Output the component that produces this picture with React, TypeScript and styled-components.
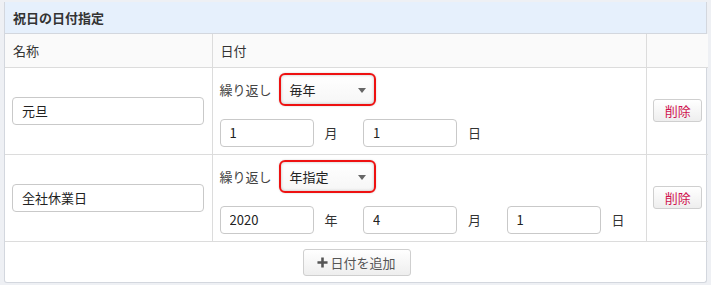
import styled, { createGlobalStyle } from "styled-components";

const GlobalStyle = createGlobalStyle`
  html, body {
    margin: 0;
    padding: 0;
    background: #eef0f4;
    font-family: "Noto Sans CJK JP", "Noto Sans", sans-serif;
    font-size: 13px;
    color: #333;
  }
`;

interface Holiday {
  id: number;
  name: string;
  repeat: string;
  year?: string;
  month: string;
  day: string;
}

const holidays: Holiday[] = [
  { id: 1, name: "元旦", repeat: "毎年", month: "1", day: "1" },
  { id: 2, name: "全社休業日", repeat: "年指定", year: "2020", month: "4", day: "1" },
];

const App = () => {
  return (
    <>
      <GlobalStyle />
      <Panel>
        <PanelHeader>祝日の日付指定</PanelHeader>
        <Table>
          <colgroup>
            <col style={{ width: 207 }} />
            <col style={{ width: 434 }} />
            <col style={{ width: 62 }} />
          </colgroup>
          <thead>
            <tr>
              <Th>名称</Th>
              <Th>日付</Th>
              <Th></Th>
            </tr>
          </thead>
          <tbody>
            {holidays.map((h) => (
              <tr key={h.id}>
                <NameTd>
                  <TextInput $width={192} defaultValue={h.name} />
                </NameTd>
                <DateTd>
                  <RepeatLine>
                    <Label>繰り返し</Label>
                    <SelectBox>
                      <span>{h.repeat}</span>
                      <Caret />
                    </SelectBox>
                  </RepeatLine>
                  <DateLine>
                    {h.year && (
                      <Unit>
                        <TextInput $width={94} defaultValue={h.year} />
                        <UnitLabel>年</UnitLabel>
                      </Unit>
                    )}
                    <Unit>
                      <TextInput $width={94} defaultValue={h.month} />
                      <UnitLabel>月</UnitLabel>
                    </Unit>
                    <Unit>
                      <TextInput $width={94} defaultValue={h.day} />
                      <UnitLabel>日</UnitLabel>
                    </Unit>
                  </DateLine>
                </DateTd>
                <ActionTd>
                  <DeleteButton>削除</DeleteButton>
                </ActionTd>
              </tr>
            ))}
            <tr>
              <FooterTd colSpan={3}>
                <AddButton>
                  <PlusIcon viewBox="0 0 12 12">
                    <path d="M4.6 0.5h2.8v4.1h4.1v2.8H7.4v4.1H4.6V7.4H0.5V4.6h4.1z" fill="#555" />
                  </PlusIcon>
                  日付を追加
                </AddButton>
              </FooterTd>
            </tr>
          </tbody>
        </Table>
      </Panel>
    </>
  );
};

export default App;

const Panel = styled.div`
  margin: 2px 4px 0 4px;
  width: 703px;
  background: #fff;
  border: 1px solid #d3d7de;
  border-top: none;
  box-sizing: border-box;
  border-radius: 0 0 3px 3px;
`;

const PanelHeader = styled.div`
  height: 32px;
  line-height: 31px;
  padding-left: 8px;
  background: #e6f0fc;
  font-weight: bold;
  font-size: 13px;
  color: #333;
  border-bottom: 1px solid #d3d7de;
  box-sizing: border-box;
`;

const Table = styled.table`
  width: 100%;
  border-collapse: collapse;
  table-layout: fixed;
  td,
  th {
    border: 1px solid #dcdcdc;
  }
  tr:first-child th {
    border-top: none;
  }
  tr > *:first-child {
    border-left: none;
  }
  tr > *:last-child {
    border-right: none;
  }
  tr:last-child td {
    border-bottom: none;
  }
`;

const Th = styled.th`
  height: 33px;
  padding: 0 8px;
  background: #fafafa;
  text-align: left;
  font-weight: normal;
  color: #333;
  box-sizing: border-box;
`;

const NameTd = styled.td`
  padding: 0 7px;
  vertical-align: middle;
`;

const DateTd = styled.td`
  padding: 5px 0 7px 7px;
  vertical-align: top;
`;

const ActionTd = styled.td`
  text-align: center;
  vertical-align: middle;
  padding: 0 0 0 1px;
`;

const FooterTd = styled.td`
  text-align: center;
  padding: 7px 0 6px;
`;

const TextInput = styled.input<{ $width: number }>`
  width: ${(p) => p.$width}px;
  height: 28px;
  box-sizing: border-box;
  border: 1px solid #c9c9c9;
  border-radius: 4px;
  padding: 0 9px;
  font-family: "Noto Sans CJK JP", "Noto Sans", sans-serif;
  font-size: 13px;
  color: #222;
  background: #fff;
  outline: none;
  flex-shrink: 0;
`;

const RepeatLine = styled.div`
  display: flex;
  align-items: center;
  gap: 7px;
`;

const Label = styled.span`
  color: #444;
`;

const SelectBox = styled.div`
  width: 97px;
  height: 33px;
  box-sizing: border-box;
  border: 2px solid #ee1111;
  border-radius: 6px;
  display: flex;
  align-items: center;
  justify-content: space-between;
  padding: 0 8px 0 9px;
  background: linear-gradient(#ffffff, #f6f6f6);
  box-shadow: inset 0 0 3px rgba(0, 0, 0, 0.25), 0 0 2px rgba(0, 0, 0, 0.2);
  color: #222;
`;

const Caret = styled.span`
  width: 0;
  height: 0;
  border-left: 4px solid transparent;
  border-right: 4px solid transparent;
  border-top: 5px solid #666;
  margin-top: 2px;
`;

const DateLine = styled.div`
  display: flex;
  align-items: center;
  margin-top: 13px;
`;

const Unit = styled.div`
  display: flex;
  align-items: center;
  width: 143.5px;
  flex-shrink: 0;
`;

const UnitLabel = styled.span`
  margin-left: 11px;
  color: #333;
`;

const DeleteButton = styled.button`
  width: 49px;
  height: 23px;
  box-sizing: border-box;
  border: 1px solid #cfcfcf;
  border-radius: 3px;
  background: linear-gradient(#ffffff, #eeeeee);
  color: #d0134f;
  font-family: "Noto Sans CJK JP", sans-serif;
  font-size: 13px;
  padding: 0;
  line-height: 20px;
`;

const AddButton = styled.button`
  display: inline-flex;
  align-items: center;
  gap: 2px;
  width: 108px;
  height: 27px;
  box-sizing: border-box;
  justify-content: center;
  border: 1px solid #cfcfcf;
  border-radius: 3px;
  background: linear-gradient(#ffffff, #eeeeee);
  color: #555;
  font-family: "Noto Sans CJK JP", sans-serif;
  font-size: 13px;
  padding: 0;
`;

const PlusIcon = styled.svg`
  width: 11px;
  height: 11px;
`;
